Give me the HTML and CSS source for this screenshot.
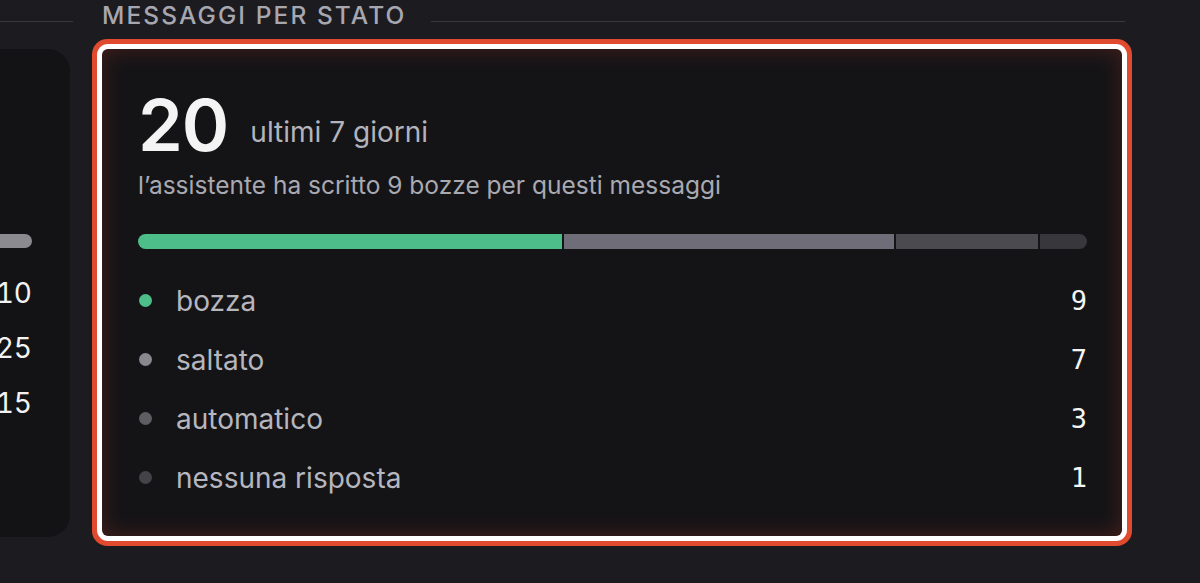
FILE: index.html
```html
<!DOCTYPE html>
<html lang="it">
<head>
<meta charset="utf-8">
<title>Messaggi per stato</title>
<link rel="stylesheet" href="styles.css">
</head>
<body>
<div class="page">
  <section class="col">
    <div class="sec-head"><span class="sec-line"></span></div>
    <div class="left-card">
      <div class="lbar"></div>
      <ul class="lrows">
        <li>10</li>
        <li>25</li>
        <li>15</li>
      </ul>
    </div>
  </section>
  <section class="col">
    <div class="sec-head"><h2 class="sec-title">MESSAGGI PER STATO</h2><span class="sec-line"></span></div>
    <div class="status-card">
      <div class="status-head">
        <span class="big">20</span>
        <span class="period">ultimi 7 giorni</span>
      </div>
      <p class="sub">l’assistente ha scritto 9 bozze per questi messaggi</p>
      <div class="bar">
        <span class="seg seg-draft" style="flex-grow:9"></span>
        <span class="seg seg-skip" style="flex-grow:7"></span>
        <span class="seg seg-auto" style="flex-grow:3"></span>
        <span class="seg seg-none" style="flex-grow:1"></span>
      </div>
      <ul class="rows">
        <li class="row"><span class="dot dot-draft"></span><span class="label">bozza</span><span class="val">9</span></li>
        <li class="row"><span class="dot dot-skip"></span><span class="label">saltato</span><span class="val">7</span></li>
        <li class="row"><span class="dot dot-auto"></span><span class="label">automatico</span><span class="val">3</span></li>
        <li class="row"><span class="dot dot-none"></span><span class="label">nessuna risposta</span><span class="val">1</span></li>
      </ul>
    </div>
  </section>
</div>
</body>
</html>
```
FILE: styles.css
```css
* { box-sizing: border-box; margin: 0; padding: 0; }
html, body { height: 100%; }
body {
  background: #1c1c20;
  font-family: Inter, "Noto Sans", sans-serif;
  overflow: hidden;
}
.page {
  display: grid;
  grid-template-columns: 300px 1020px;
  column-gap: 32px;
  margin-left: -230px;
}
.sec-head {
  display: flex;
  align-items: flex-end;
  gap: 25px;
  height: 30px;
  margin-bottom: 19px;
}
.sec-title {
  font-size: 24.5px;
  line-height: 30px;
  font-weight: 500;
  letter-spacing: 0.085em;
  color: #a7a7b0;
  white-space: nowrap;
}
.sec-line {
  flex: 1;
  height: 1px;
  background: #38383e;
  margin-bottom: 8px;
  margin-right: -3px;
}
.left-card {
  height: 488px;
  background: #131316;
  border-radius: 22px;
  padding: 185px 38px 0 0;
}
.lbar {
  height: 14px;
  border-radius: 7px;
  background: #8b8b8f;
}
.lrows { list-style: none; margin-top: 17px; }
.lrows li {
  height: 55px;
  display: flex;
  align-items: center;
  justify-content: flex-end;
  font-size: 28px;
  line-height: 34px;
  font-variant-numeric: tabular-nums;
  color: #f2f2f2;
}
.status-card {
  background: #141417;
  border-radius: 6px;
  padding: 40px 35px 29px 36px;
  box-shadow: 0 0 0 5px #ffffff, 0 0 0 10px #e04a2e, inset 0 0 22px rgba(190, 55, 35, 0.3);
}
.status-head {
  display: flex;
  align-items: flex-end;
  gap: 22px;
}
.big {
  font-size: 72px;
  line-height: 72px;
  font-weight: 600;
  letter-spacing: -1px;
  color: #f4f4f4;
}
.period {
  font-size: 28px;
  line-height: 32px;
  color: #b3b3bc;
  margin-bottom: 13px;
}
.sub {
  font-size: 24.5px;
  line-height: 30px;
  color: #a9a9b2;
  margin-top: 9px;
}
.bar {
  display: flex;
  gap: 2px;
  height: 15px;
  margin-top: 34px;
  border-radius: 8px;
  overflow: hidden;
}
.seg { flex-basis: 0; }
.seg-draft { background: #4dbd8a; }
.seg-skip { background: #6f6e78; }
.seg-auto { background: #4a4a4f; }
.seg-none { background: #38383c; }
.rows { list-style: none; margin-top: 22px; }
.row {
  display: flex;
  align-items: center;
  height: 59px;
}
.dot {
  width: 13px;
  height: 13px;
  border-radius: 50%;
  margin-left: 1px;
  margin-right: 24px;
}
.dot-draft { background: #4dbd8a; }
.dot-skip { background: #89888e; }
.dot-auto { background: #5d5d62; }
.dot-none { background: #444448; }
.label {
  flex: 1;
  font-size: 28px;
  line-height: 34px;
  color: #b6b6be;
}
.val {
  font-family: "DejaVu Sans Mono", monospace;
  font-size: 27px;
  line-height: 34px;
  color: #f4f4f4;
}
```
